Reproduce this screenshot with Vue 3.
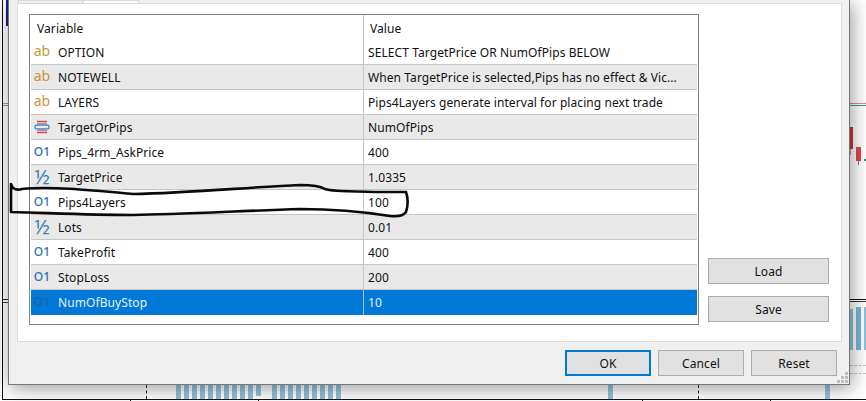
<script setup>
const rows = [
  { icon: 'ab', name: 'OPTION', value: 'SELECT TargetPrice OR NumOfPips BELOW' },
  { icon: 'ab', name: 'NOTEWELL', value: 'When TargetPrice is selected,Pips has no effect & Vic...' },
  { icon: 'ab', name: 'LAYERS', value: 'Pips4Layers generate interval for placing next trade' },
  { icon: 'enum', name: 'TargetOrPips', value: 'NumOfPips' },
  { icon: 'int', name: 'Pips_4rm_AskPrice', value: '400' },
  { icon: 'half', name: 'TargetPrice', value: '1.0335' },
  { icon: 'int', name: 'Pips4Layers', value: '100' },
  { icon: 'half', name: 'Lots', value: '0.01' },
  { icon: 'int', name: 'TakeProfit', value: '400' },
  { icon: 'int', name: 'StopLoss', value: '200' },
  { icon: 'int', name: 'NumOfBuyStop', value: '10', selected: true }
]
const ticks = [130, 258, 642, 770]
const bars = Array.from({ length: 21 }, (_, i) => 176 + i * 8).filter(x => x !== 264 && x !== 256)
</script>

<template>
  <div class="screen">
    <div class="chart">
      <i class="ln axis-left"></i>
      <i class="ln navy"></i>
      <i class="ln h300l"></i>
      <i class="ln h302l"></i>
      <i class="ln h104lr"></i>
      <i class="ln h105lg"></i>
      <i class="ln h104rr"></i>
      <i class="ln h105rg"></i>
      <i class="ln candle-a"></i>
      <i class="ln wick-a"></i>
      <i class="ln candle-b"></i>
      <i class="ln wick-b"></i>
      <i class="ln dot-g"></i>
      <i class="ln h300r"></i>
      <i class="ln h302r"></i>
      <i class="ln bar-r1"></i>
      <i class="ln bar-r2"></i>
      <i class="ln bar-r3"></i>
      <i class="ln dash-r1"></i>
      <i class="ln dash-r2"></i>
      <i class="ln bottom"></i>
      <i class="ln vdash v1"></i>
      <i class="ln vdash v2"></i>
      <i v-for="x in ticks" :key="x" class="ln tick" :style="{ left: x + 'px' }"></i>
      <i v-for="x in bars" :key="x" class="ln bar" :style="{ left: x + 'px' }"></i>
      <i class="ln bar" style="left: 256px; height: 11px"></i>
      <i class="ln bar" style="left: 272px; height: 9px"></i>
      <i class="ln bar" style="left: 608px"></i>
      <i class="ln bar" style="left: 825px"></i>
    </div>

    <div class="dialog">
      <div class="tabs">
        <span class="tab"></span>
        <span class="tab active"></span>
      </div>
      <div class="page">
        <div class="table">
          <div class="row head">
            <div class="cell name-cell"><span class="head-l">Variable</span></div>
            <div class="cell value-cell"><span class="head-r">Value</span></div>
          </div>
          <div v-for="r in rows" :key="r.name" class="row" :class="{ selected: r.selected }">
            <div class="cell name-cell">
              <span class="icon" :class="'i-' + r.icon">
                <template v-if="r.icon === 'ab'">ab</template>
                <template v-else-if="r.icon === 'int'">O1</template>
                <template v-else-if="r.icon === 'half'">½</template>
                <svg v-else width="16" height="16" viewBox="0 0 16 16">
                  <path d="M3 2.5h10M3 13.5h10" stroke="#d0444c" stroke-width="1.4" fill="none" />
                  <path d="M3 4.8h10M3 11.2h10" stroke="#d0606a" stroke-width="1.2" fill="none" />
                  <rect x="1" y="6.2" width="14" height="3.6" rx="1.4" fill="none" stroke="#2f86cf" stroke-width="1.3" />
                </svg>
              </span>
              <span class="label">{{ r.name }}</span>
            </div>
            <div class="cell value-cell"><span class="val">{{ r.value }}</span></div>
          </div>
        </div>
        <div class="side">
          <button class="btn wide">Load</button>
          <button class="btn wide">Save</button>
        </div>
      </div>
      <div class="footer">
        <button class="btn act default">OK</button>
        <button class="btn act">Cancel</button>
        <button class="btn act">Reset</button>
      </div>
      <svg class="grip" width="13" height="13" viewBox="0 0 13 13" fill="#bdbdbd">
        <rect x="9" y="1" width="3" height="3" />
        <rect x="5" y="5" width="3" height="3" />
        <rect x="9" y="5" width="3" height="3" />
        <rect x="1" y="9" width="3" height="3" />
        <rect x="5" y="9" width="3" height="3" />
        <rect x="9" y="9" width="3" height="3" />
      </svg>
    </div>

    <svg class="ink" width="866" height="401" viewBox="0 0 866 401">
      <path
        d="M11 184 L13 188 C16 190 19 190 22 189 C50 186 90 190 133 194 C190 193 250 187 300 185 C312 185 320 186 325 189 C330 191 340 191 380 192 L406 192 C408 198 408 206 406 212 C403 216 398 217 390 216 C365 212 330 209 300 209 C240 211 180 214 133 215 C90 215 50 213 11 212 Z"
        fill="none" stroke="#0a0a0a" stroke-width="2.6" stroke-linejoin="round"
      />
    </svg>
  </div>
</template>

<style>
html, body { margin: 0; padding: 0; background: #fff; }
</style>

<style scoped>
.screen {
  position: relative;
  width: 866px;
  height: 401px;
  overflow: hidden;
  background: #fff;
  font-family: "Noto Sans", "DejaVu Sans", sans-serif;
  font-size: 12px;
  letter-spacing: 0.08px;
  color: #111;
}
.chart { position: absolute; inset: 0; }
.ln { position: absolute; display: block; }
.axis-left { left: 2px; top: 0; width: 1px; height: 400px; background: #111; }
.navy { left: 6px; top: 0; width: 2px; height: 26px; background: #1c1c8c; }
.h300l { left: 2px; top: 299px; width: 6px; height: 1px; background: #222; }
.h302l { left: 3px; top: 302px; width: 5px; height: 1px; background: #444; }
.h104lr { left: 3px; top: 103px; width: 5px; height: 1px; background: #d88; }
.h105lg { left: 3px; top: 105px; width: 5px; height: 1px; background: #6a9; }
.h104rr { left: 850px; top: 103px; width: 16px; height: 1px; background: #d88; }
.h105rg { left: 850px; top: 105px; width: 16px; height: 1px; background: #4a9a88; }
.candle-a { left: 850px; top: 127px; width: 3px; height: 22px; background: #c83a38; }
.wick-a { left: 850px; top: 149px; width: 1px; height: 6px; background: #c9a070; }
.candle-b { left: 856px; top: 147px; width: 5px; height: 14px; background: #e04848; }
.wick-b { left: 858px; top: 161px; width: 1px; height: 4px; background: #d06060; }
.dot-g { left: 864px; top: 159px; width: 2px; height: 2px; background: #2a9a88; }
.h300r { left: 850px; top: 299px; width: 16px; height: 1px; background: #111; }
.h302r { left: 850px; top: 301px; width: 16px; height: 1px; background: #333; }
.bar-r1 { left: 850px; top: 309px; width: 3px; height: 41px; background: #8ec4dd; }
.bar-r2 { left: 856px; top: 307px; width: 5px; height: 43px; background: #7ab6d4; }
.bar-r3 { left: 864px; top: 307px; width: 2px; height: 43px; background: #8ec4dd; }
.dash-r1 { left: 850px; top: 365px; width: 16px; height: 0; border-top: 1px dashed #d8c0b0; }
.dash-r2 { left: 850px; top: 373px; width: 16px; height: 0; border-top: 1px dashed #d8c0b0; }
.bottom { left: 2px; top: 399px; width: 864px; height: 1px; background: #111; }
.vdash { top: 385px; width: 0; height: 14px; border-left: 1px dashed #111; }
.v1 { left: 146px; }
.v2 { left: 698px; }
.tick { top: 399px; width: 1px; height: 2px; background: #111; }
.bar { top: 385px; width: 5px; height: 14px; background: #8fc4dc; }

.dialog {
  position: absolute;
  left: 8px;
  top: 0;
  width: 842px;
  height: 385px;
  box-sizing: border-box;
  background: #f0f0f0;
  border: 1px solid #767676;
  border-top: 0;
  box-shadow: 2px 3px 18px rgba(0, 0, 0, 0.4);
  display: flex;
  flex-direction: column;
}
.tabs { height: 3px; display: flex; overflow: hidden; padding-left: 9px; }
.tab { width: 65px; height: 6px; background: #f0f0f0; border: 1px solid #d9d9d9; box-sizing: border-box; }
.tab.active { width: 56px; background: #fff; }
.page {
  margin-left: 8px;
  width: 825px;
  height: 339px;
  box-sizing: border-box;
  border: 1px solid #dcdcdc;
  background: #fff;
  padding: 10px 0 0 11px;
  display: flex;
  align-items: flex-start;
}
.table {
  width: 670px;
  height: 311px;
  box-sizing: border-box;
  border: 1px solid #828282;
  padding: 0 1px;
  flex: none;
}
.row {
  display: grid;
  grid-template-columns: 333px 1fr;
  height: 25px;
  box-sizing: border-box;
  border-bottom: 1px solid #c6c6c6;
  background: #fff;
}
.row:nth-child(odd) { background: #e9e9e9; }
.row.head { background: #fff; border-bottom: 0; }
.row.head .cell { padding-top: 1px; }
.row.selected { background: #0078d7; color: #e4f2ff; border-bottom: 0; }
.cell { display: flex; align-items: center; min-width: 0; white-space: nowrap; }
.name-cell { border-right: 1px solid #c6c6c6; }
.selected .name-cell { border-right-color: #9cc8ec; }
.value-cell { padding-left: 4px; }
.head-l { padding-left: 6px; }
.head-r { padding-left: 2px; }
.icon {
  width: 16px;
  height: 16px;
  margin-left: 3px;
  margin-right: 8px;
  display: flex;
  align-items: center;
  justify-content: center;
  flex: none;
  line-height: 16px;
  letter-spacing: 0;
}
.i-ab { color: #c8963c; font-size: 14px; margin-top: -3px; }
.i-int { color: #2f74ad; font-size: 12px; font-weight: 500; margin-top: -1px; }
.i-half { color: #3a7fb5; font-size: 20px; margin-top: -1px; }
.selected .icon { color: #1a62a8; }

.side {
  margin-left: 9px;
  width: 121px;
  height: 308px;
  display: flex;
  flex-direction: column;
  justify-content: flex-end;
  gap: 12px;
}
.btn {
  font: inherit;
  letter-spacing: inherit;
  color: #111;
  background: #e1e1e1;
  border: 1px solid #adadad;
  height: 26px;
  padding: 0;
  box-sizing: border-box;
}
.wide { width: 121px; }
.footer {
  display: flex;
  justify-content: flex-end;
  gap: 7px;
  padding: 8px 12px 8px 0;
}
.act { width: 86px; }
.default { border: 2px solid #0078d7; }
.grip { position: absolute; right: 0; bottom: 0; }
.ink { position: absolute; left: 0; top: 0; pointer-events: none; }
</style>
